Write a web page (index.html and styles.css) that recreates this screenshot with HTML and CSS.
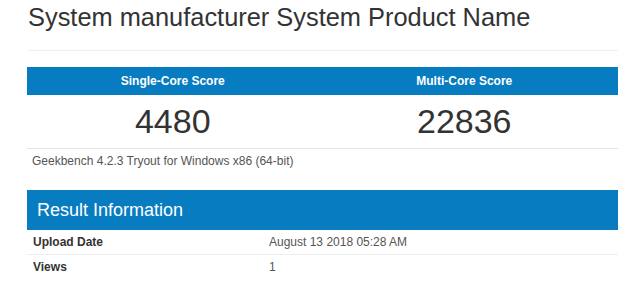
FILE: index.html
```html
<!DOCTYPE html>
<html lang="en">
<head>
    <meta charset="UTF-8">
    <meta name="viewport" content="width=device-width, initial-scale=1.0">
    <title>System manufacturer System Product Name - Geekbench Browser</title>
    <link rel="stylesheet" href="styles.css">
</head>
<body>
    <div class="page">
        <h1 class="page-title">System manufacturer System Product Name</h1>

        <div class="scores">
            <div class="score-head">
                <div class="score-name">Single-Core Score</div>
                <div class="score-name">Multi-Core Score</div>
            </div>
            <div class="score-row">
                <div class="score-value">4480</div>
                <div class="score-value">22836</div>
            </div>
        </div>
        <div class="version">Geekbench 4.2.3 Tryout for Windows x86 (64-bit)</div>

        <div class="section-head">Result Information</div>
        <div class="info-table">
            <div class="info-row">
                <div class="info-label">Upload Date</div>
                <div class="info-value">August 13 2018 05:28 AM</div>
            </div>
            <div class="info-row">
                <div class="info-label">Views</div>
                <div class="info-value">1</div>
            </div>
        </div>
    </div>
</body>
</html>
```

FILE: styles.css
```css
body {
    font-family: "Liberation Sans", Arial, sans-serif;
    margin: 0;
    background-color: #fff;
    color: #333;
}

.page {
    width: 591px;
    padding-left: 27px;
}

.page-title {
    font-size: 25.4px;
    font-weight: normal;
    line-height: 30px;
    color: #333;
    margin: 2px 0 0 1px;
    padding-bottom: 18px;
    border-bottom: 1px solid #eee;
    margin-bottom: 16px;
}

.score-head {
    display: grid;
    grid-template-columns: 1fr 1fr;
    padding-right: 8px;
    background-color: #087cc1;
}

.score-name {
    font-size: 12px;
    font-weight: bold;
    line-height: 28px;
    color: #fff;
    text-align: center;
}

.score-row {
    display: grid;
    grid-template-columns: 1fr 1fr;
    padding-right: 8px;
    border-bottom: 1px solid #e6e6e6;
}

.score-value {
    font-size: 34px;
    line-height: 53px;
    text-align: center;
    color: #333;
}

.version {
    font-size: 12px;
    line-height: 18px;
    color: #555;
    padding: 3px 0 0 5px;
    margin-bottom: 20px;
}

.section-head {
    font-size: 18px;
    line-height: 40px;
    color: #fff;
    background-color: #087cc1;
    padding-left: 10px;
}

.info-row {
    display: grid;
    grid-template-columns: 236px 1fr;
    border-bottom: 1px solid #eee;
}

.info-row:last-child {
    border-bottom: none;
}

.info-label,
.info-value {
    font-size: 12px;
    line-height: 24px;
    padding: 0 6px;
}

.info-label {
    font-weight: bold;
    color: #333;
}

.info-value {
    color: #555;
}
```
